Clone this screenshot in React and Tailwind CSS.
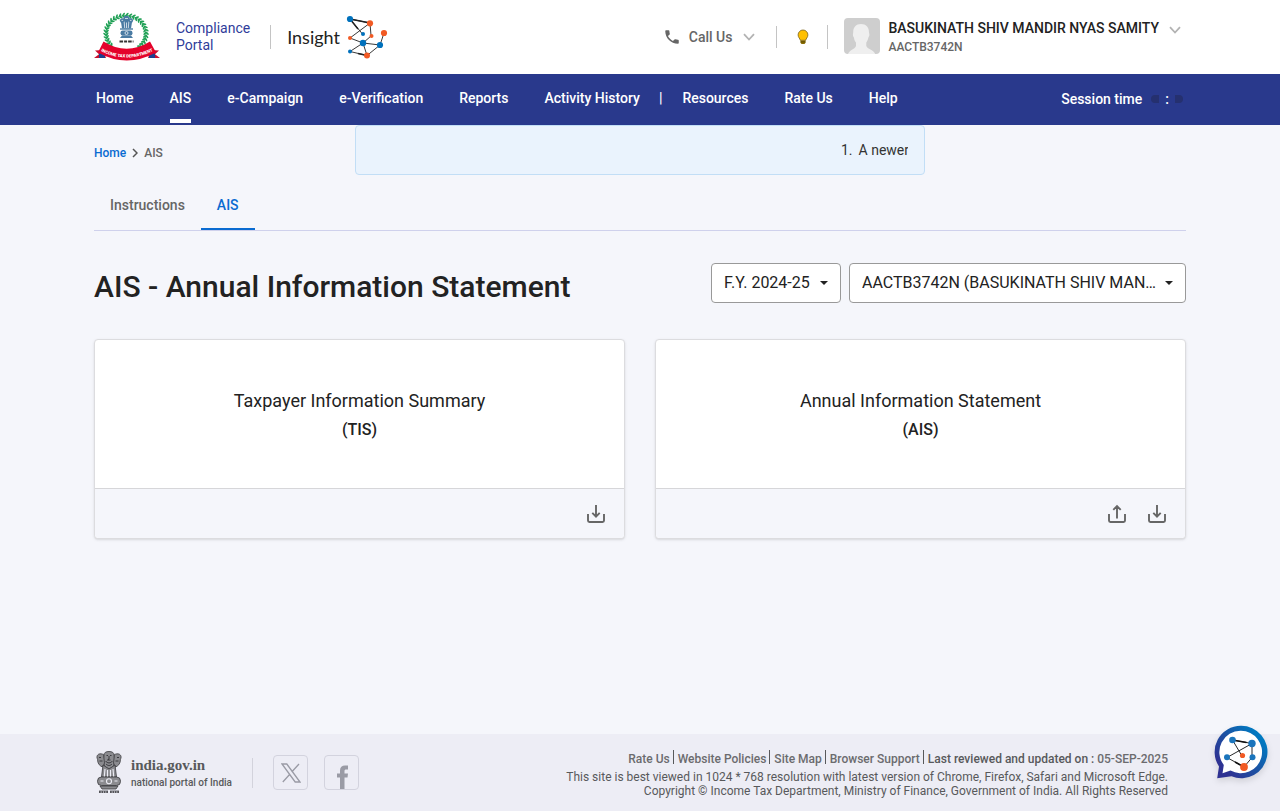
import React from "react";
import { MdPhone } from "react-icons/md";

const BLUE = "#0071bc";
const ORANGE = "#f15a24";

function DepartmentEmblem() {
  const leaves = [];
  for (let i = 0; i < 29; i++) {
    const a = ((136 + (i * 268) / 28) * Math.PI) / 180;
    const x = 32 + 20 * Math.cos(a);
    const y = 19.5 + 18 * Math.sin(a);
    const deg = (a * 180) / Math.PI;
    leaves.push(
      <g key={i} transform={`translate(${x} ${y}) rotate(${deg})`} fill="#1fa055">
        <ellipse cx="1.500" cy="0" rx="2.100" ry="0.900" transform="rotate(45)" />
        <ellipse cx="-1.500" cy="0" rx="2.100" ry="0.900" transform="rotate(-45)" />
      </g>
    );
  }
  return (
    <svg viewBox="0 0 66 47" className="h-[47px] w-[66px] overflow-visible" role="img" aria-label="Income Tax Department">
      <ellipse cx="32" cy="19.500" rx="20" ry="18" fill="none" stroke="#1fa055" strokeWidth="0.800" />
      {leaves}
      <g fill="#4a7ba3">
        <circle cx="32.500" cy="5" r="3.200" />
        <circle cx="28.300" cy="6.600" r="2.400" />
        <circle cx="36.700" cy="6.600" r="2.400" />
        <path d="M27 8h11l-1 6.500h-9z" />
        <path d="M26 14.300h13v1.400h-13z" />
        <rect x="26.500" y="16.500" width="12" height="5" rx="2.200" />
        <path d="M28 21.500h9l2 2.400h-13z" />
      </g>
      <g stroke="#fff" strokeWidth="0.700" fill="none">
        <path d="M30.200 8l.5 6M32.500 8.500v5.500M34.800 8l-.5 6" />
        <circle cx="32.500" cy="19" r="1.500" />
        <path d="M31 4.500h3M27.500 6.400h1.600M35.900 6.400h1.600" />
      </g>
      <path d="M25.500 27.500h14" stroke="#333" strokeWidth="2" strokeDasharray="3.600 1 3 1" />
      <path d="M9 36L1 36.500l4 3.700L0 44h12z" fill="#c8102e" />
      <path d="M57 36l8 .5-4 3.700 5 3.800H54z" fill="#c8102e" />
      <path d="M5 40l6-4v8H5z" fill="#1d3f8f" />
      <path d="M61 40l-6-4v8h6z" fill="#1d3f8f" />
      <path d="M9.500 27.500Q32.500 42 56 27.500L62 38.500Q32.500 54.500 4 38.500z" fill="#e4022b" />
      <path id="emblem-ribbon" d="M4 35.500Q32.500 51.500 62 35.500" fill="none" />
      <text fill="#fff" fontFamily="Roboto, sans-serif" fontWeight="900" fontSize="4.300">
        <textPath href="#emblem-ribbon" startOffset="50%" textAnchor="middle">
          INCOME TAX DEPARTMENT
        </textPath>
      </text>
    </svg>
  );
}

function InsightGraph() {
  return (
    <svg viewBox="0 0 42 44" className="h-11 w-[42px]" aria-hidden="true">
      <g stroke="#222" strokeWidth="0.900" fill="none">
        <path d="M4 4L24 8M4 4L16.500 19M24 8L4 23M24 8l1 12.500M25 21l-8 7M4 23l13 5M17 28l17 2M38 18l-4 12M17 28L4 36.500M4 36.500L21 40.500M17 28l4 12.500M34 30L21 40.500" />
        <path d="M4 4L24 8M4 4l8 10M21 40.500l-9-2" strokeWidth="1.500" />
      </g>
      <g fill={BLUE}>
        <circle cx="4" cy="4" r="3.100" />
        <circle cx="17" cy="19" r="2" />
        <circle cx="17" cy="28" r="3.200" />
        <circle cx="34" cy="30" r="3.100" />
        <circle cx="4" cy="36.500" r="2" />
      </g>
      <g fill={ORANGE}>
        <circle cx="24" cy="8.300" r="3.100" />
        <circle cx="4" cy="23" r="2" />
        <circle cx="25.500" cy="21" r="2" />
        <circle cx="38" cy="18" r="3.100" />
        <circle cx="21" cy="40.500" r="3" />
      </g>
    </svg>
  );
}

function Chevron() {
  return (
    <svg viewBox="0 0 12 8" className="h-2 w-3" fill="none" stroke="#b3b3b3" strokeWidth="1.800" aria-hidden="true">
      <path d="M1 1.200l5 5.300 5-5.300" />
    </svg>
  );
}

function Bulb() {
  return (
    <svg viewBox="0 0 12 16" className="h-4 w-3" aria-hidden="true">
      <path d="M6 1a4.900 4.900 0 0 0-4.900 4.900c0 2.600 2 3.600 2.200 5.400h5.400c.2-1.800 2.200-2.800 2.200-5.400A4.900 4.900 0 0 0 6 1z" fill="#ffc000" stroke="#7a621a" strokeWidth="0.800" />
      <path d="M3.500 11.500h5v2.200l-1 1.300h-3l-1-1.300z" fill="#8a6d00" />
      <path d="M3.500 12.900h5" stroke="#4d3d00" strokeWidth="0.700" />
    </svg>
  );
}

function Avatar() {
  return (
    <svg viewBox="0 0 36 36" className="mb-[2px] size-9 rounded" role="img" aria-label="Profile">
      <rect width="36" height="36" fill="#cecece" />
      <path d="M17 6c5 0 8 3 8 8.500 0 1 .6 1.200.3 3-.2 1.300-.8 1.500-1 2.500-.5 2.500-1.500 3.500-2 4.500v3.500c1 3 7 3.500 9 8H4c2-4.500 7-5 8-8v-3.500c-.8-1-1.700-2.500-2-4.500-.2-1-.9-1.200-1-2.500-.2-1.800.2-2 .2-3C9.200 9 12 6 17 6z" fill="#efefef" />
    </svg>
  );
}

function TransferIcon({ up }) {
  return (
    <svg viewBox="0 0 20 20" className="size-5" fill="none" stroke="#666" strokeWidth="1.900" aria-hidden="true">
      <path d="M2 10v6.600q0 1.400 1.400 1.400h13.200q1.400 0 1.400-1.400V10" />
      {up ? <path d="M10 14.500V2.200M6.300 5.800L10 2l3.700 3.800" /> : <path d="M10 1v11.500M6.300 8.800L10 12.600l3.700-3.800" />}
    </svg>
  );
}

function StateEmblem() {
  return (
    <svg viewBox="0 0 26 43" className="h-[43px] w-[26px]" role="img" aria-label="State Emblem of India">
      <g fill="#8b8b8f" stroke="#3a3a3e" strokeWidth="0.800">
        <path d="M8 4c0-2.500 2-3.500 5-3.500s5 1 5 3.500l1 6-2 6-4 2-4-2-2-6z" />
        <path d="M7.500 3.500C4 2 1.500 3 1 5.500c-.4 2 1 2.500.7 4.500C2 13 4 15 6.500 16l2-4z" />
        <path d="M18.500 3.500C22 2 24.500 3 25 5.500c.4 2-1 2.500-.7 4.500C24 13 22 15 19.500 16l-2-4z" />
        <path d="M7 14l-1.500 12h15L19 14l-6 4z" />
        <rect x="1.500" y="26" width="23" height="8.500" rx="4" />
        <path d="M4 35h18l-2 3H6z" />
      </g>
      <g stroke="#2f2f33" fill="none" strokeWidth="0.900">
        <path d="M10.500 4.500h1.500M14 4.500h1.500M13 5v3l-1.500 1h3M9.500 10c2 2.500 5 2.500 7 0M10 13c2 2 4 2 6 0M3 6.500h2M21 6.500h2M3.500 10h3M19.500 10h3" />
      </g>
      <g stroke="#ededf5" fill="none" strokeWidth="1.100">
        <path d="M9 18l-.7 7.500M11.500 19v6.500M14.500 19v6.500M17 18l.7 7.500M4.500 30h3M18.500 30h3" />
        <circle cx="13" cy="30.200" r="2.500" />
      </g>
      <path d="M3 41h9M14 41h9" stroke="#55555a" strokeWidth="1.800" strokeDasharray="1.800 0.600" />
      <path d="M3 39.800h9M14 39.800h9" stroke="#55555a" strokeWidth="0.600" />
    </svg>
  );
}

function ChatBubble() {
  return (
    <svg viewBox="0 0 54 54" className="size-[54px] drop-shadow-md" aria-hidden="true">
      <defs>
        <linearGradient id="ring" x1="0.150" y1="0.800" x2="0.850" y2="0.200">
          <stop offset="0" stopColor="#2e3192" />
          <stop offset="0.500" stopColor="#1c52a3" />
          <stop offset="1" stopColor="#0079c1" />
        </linearGradient>
      </defs>
      <path d="M27 .8a26.200 26.200 0 1 1-9.500 50.500L3.200 53.200 5 41.500A26.200 26.200 0 0 1 27 .8z" fill="url(#ring)" />
      <path d="M27 5.800a21.200 21.200 0 1 1-10.500 39.700l-8 2.700 1.300-8.200A21.200 21.200 0 0 1 27 5.800z" fill="#fff" />
      <g stroke="#111" strokeWidth="0.900" fill="none">
        <path d="M18.500 15l19.500 3.500L13 32.500 30 42M38 18.500v14L30 42M18.500 15l9.500 16" />
        <path d="M18.500 15l14 2.500M30 42l-9-5" strokeWidth="1.500" />
      </g>
      <g fill="#1b75bc">
        <circle cx="18.500" cy="15" r="3.300" />
        <circle cx="38" cy="18.500" r="3.700" />
        <circle cx="13" cy="32.300" r="3" />
        <circle cx="38.500" cy="32.300" r="3" />
      </g>
      <circle cx="28.500" cy="30.500" r="2.600" fill="#f15a24" />
      <circle cx="30" cy="42" r="3.900" fill="#f15a24" />
    </svg>
  );
}

function Picker({ label, value, className }) {
  return (
    <div className={`relative ${className}`}>
      <select
        aria-label={label}
        className="h-10 w-full appearance-none overflow-hidden rounded border border-[#999] bg-white pl-3 pr-7 text-base text-ellipsis whitespace-nowrap text-[#222]"
      >
        <option>{value}</option>
      </select>
      <svg viewBox="0 0 8 4" className="pointer-events-none absolute top-[18px] right-[13px] h-1 w-2" aria-hidden="true">
        <path d="M0 0h8L4 4z" fill="#222" />
      </svg>
    </div>
  );
}

function StatementCard({ title, short, actions }) {
  return (
    <section className="flex h-[200px] flex-col rounded border border-[#dcdcdf] bg-white shadow-sm">
      <div className="flex flex-1 flex-col items-center justify-center gap-[5px] pt-[3px] text-[#222]">
        <h2 className="text-lg leading-6">{title}</h2>
        <p className="text-base leading-6 font-medium">({short})</p>
      </div>
      <div className="flex h-[50px] items-center justify-end gap-5 rounded-b border-t border-[#d6d6d9] bg-[#f5f6fb] px-[18px]">
        {actions.map((a) => (
          <button key={a} type="button" aria-label={`${a} ${short}`}>
            <TransferIcon up={a === "Upload"} />
          </button>
        ))}
      </div>
    </section>
  );
}

const mainLinks = ["Home", "AIS", "e-Campaign", "e-Verification", "Reports", "Activity History"];
const moreLinks = ["Resources", "Rate Us", "Help"];
const footerLinks = ["Rate Us", "Website Policies", "Site Map", "Browser Support"];

function NavLink({ name }) {
  return (
    <a href="#" className={`flex h-[49px] items-center border-b-4 pt-[3px] ${name === "AIS" ? "border-white" : "border-transparent"}`}>
      {name}
    </a>
  );
}

export default function App() {
  return (
    <div className="flex min-h-screen flex-col bg-[#f5f6fb] font-[Roboto,'Liberation_Sans',sans-serif] text-[#222]">
      <header className="bg-white">
        <div className="mx-auto flex h-[74px] max-w-[1092px] items-center justify-between">
          <div className="flex items-center">
            <DepartmentEmblem />
            <a href="#" className="ml-4 text-sm leading-[17px] text-[#2f3c9a]">
              Compliance
              <br />
              Portal
            </a>
            <div className="mr-4 ml-5 h-6 w-px bg-[#c4c4c4]" />
            <span className="font-[Lato,sans-serif] text-lg text-[#222]">Insight</span>
            <div className="ml-[6px]">
              <InsightGraph />
            </div>
          </div>
          <div className="flex items-center">
            <button type="button" className="flex items-center text-sm font-medium text-[#666]">
              <MdPhone className="mr-2 size-[18px]" />
              <span className="mr-[11px]">Call Us</span>
              <Chevron />
            </button>
            <div className="mr-5 ml-[21px] h-[22px] w-px bg-[#c4c4c4]" />
            <button type="button" aria-label="Tips">
              <Bulb />
            </button>
            <div className="mr-4 ml-[18px] h-6 w-px bg-[#c4c4c4]" />
            <Avatar />
            <button type="button" className="ml-2 flex items-start pr-[5px] text-left">
              <span className="flex flex-col">
                <span className="text-sm leading-5 font-medium">BASUKINATH SHIV MANDIR NYAS SAMITY</span>
                <span className="text-xs leading-[18px] font-medium text-[#666]">AACTB3742N</span>
              </span>
              <span className="mt-2 ml-[10px]">
                <Chevron />
              </span>
            </button>
          </div>
        </div>
      </header>

      <nav className="bg-[#29398c] text-sm font-medium text-white">
        <div className="mx-auto flex h-[51px] max-w-[1092px] items-start justify-between">
          <div className="flex items-start pl-[2px]">
            <div className="flex gap-9">
              {mainLinks.map((n) => (
                <NavLink key={n} name={n} />
              ))}
            </div>
            <span className="mr-5 ml-[19px] flex h-[49px] items-center border-b-4 border-transparent pt-[3px]">|</span>
            <div className="flex gap-9">
              {moreLinks.map((n) => (
                <NavLink key={n} name={n} />
              ))}
            </div>
          </div>
          <div className="flex h-[50px] items-center pr-[3px]">
            <span className="mr-[9px]">Session time</span>
            <span className="size-2 rounded-l-full bg-[#25306f]" />
            <span className="mx-[6px]">:</span>
            <span className="size-2 rounded-r-full bg-[#25306f]" />
          </div>
        </div>
      </nav>

      <main className="mx-auto w-full max-w-[1092px] flex-1">
        <div className="grid grid-cols-[1fr_570px_1fr]">
          <div className="flex items-center gap-[6px] pt-[6px] text-xs font-medium">
            <a href="#" className="text-[#0a6bd1]">Home</a>
            <svg viewBox="0 0 6 10" className="h-[10px] w-[6px]" fill="none" stroke="#555" strokeWidth="1.500" aria-hidden="true">
              <path d="M1 1l4 4-4 4" />
            </svg>
            <span className="text-[#666]">AIS</span>
          </div>
          <div className="flex h-[50px] items-center justify-end rounded border border-[#c2def6] bg-[#eaf3fd] px-4">
            <div className="flex w-[67px] gap-[6px] overflow-hidden text-sm whitespace-nowrap text-[#333]">
              <span>1.</span>
              <span>A newer</span>
            </div>
          </div>
        </div>

        <div role="tablist" className="mt-[6px] flex border-b border-[#cfd1ec] text-sm font-medium">
          <button type="button" role="tab" aria-selected="false" className="h-[49px] border-b-2 border-transparent px-4 text-[#666]">
            Instructions
          </button>
          <button type="button" role="tab" aria-selected="true" className="h-[49px] border-b-2 border-[#0a6bd1] px-4 text-[#0a6bd1]">
            AIS
          </button>
        </div>

        <div className="mt-8 flex h-10 items-center justify-between">
          <h1 className="pt-2 text-3xl font-medium">AIS - Annual Information Statement</h1>
          <div className="flex gap-2">
            <Picker label="Financial year" value="F.Y. 2024-25" className="w-[130px]" />
            <Picker label="Taxpayer" value="AACTB3742N (BASUKINATH SHIV MANDIR NYAS SAMITY)" className="w-[337px]" />
          </div>
        </div>

        <div className="mt-9 grid grid-cols-2 gap-[30px]">
          <StatementCard title="Taxpayer Information Summary" short="TIS" actions={["Download"]} />
          <StatementCard title="Annual Information Statement" short="AIS" actions={["Upload", "Download"]} />
        </div>
      </main>

      <footer className="bg-[#ededf5]">
        <div className="mx-auto flex h-[77px] max-w-[1092px] items-center justify-between pr-[18px] pl-[2px] text-[#58595b]">
          <div className="flex items-center">
            <StateEmblem />
            <a href="#" className="ml-[9px] flex flex-col">
              <span className="font-['Liberation_Serif',serif] text-[15px] leading-5 font-bold">india.gov.in</span>
              <span className="text-[10px] leading-4 font-medium">national portal of India</span>
            </a>
            <div className="mx-5 h-[30px] w-px bg-[#d3d3dc]" />
            <a href="#" aria-label="X" className="flex size-[35px] items-center justify-center rounded border border-[#d3d3de]">
              <svg viewBox="0 0 20 20" className="size-5" fill="none" stroke="#9a9ba5" strokeWidth="1.300" aria-hidden="true">
                <path d="M1 1h4.800L19 19h-4.800zM18 1l-7.300 8M8.800 11.300L1.800 19" />
              </svg>
            </a>
            <a href="#" aria-label="Facebook" className="ml-4 flex size-[35px] items-end justify-center rounded border border-[#d3d3de] pl-[2px]">
              <svg viewBox="0 0 13 24" className="h-6 w-[13px]" aria-hidden="true">
                <path d="M4 24V12.500H1V8.500h3V5.500C4 2.200 6 .5 9 .5h3v4h-2c-1 0-1.500.5-1.500 1.500v2.500H12l-.5 4h-3V24z" fill="#9a9ba5" />
              </svg>
            </a>
          </div>
          <div className="pt-[5px] text-right text-xs leading-[14px]">
            <p className="mb-1 flex justify-end font-medium">
              {footerLinks.map((l) => (
                <React.Fragment key={l}>
                  <a href="#" className="text-[#6b6b6e]">
                    {l}
                  </a>
                  <span className="mr-1 ml-[3px] -mt-[2px] mb-[2px] w-px bg-[#58595b]" />
                </React.Fragment>
              ))}
              <span>
                Last reviewed and updated on : <span className="text-[#6b6b6e]">05-SEP-2025</span>
              </span>
            </p>
            <p>This site is best viewed in 1024 * 768 resolution with latest version of Chrome, Firefox, Safari and Microsoft Edge.</p>
            <p>Copyright © Income Tax Department, Ministry of Finance, Government of India. All Rights Reserved</p>
          </div>
        </div>
      </footer>

      <button type="button" aria-label="Chat" className="fixed right-3 bottom-8">
        <ChatBubble />
      </button>
    </div>
  );
}
